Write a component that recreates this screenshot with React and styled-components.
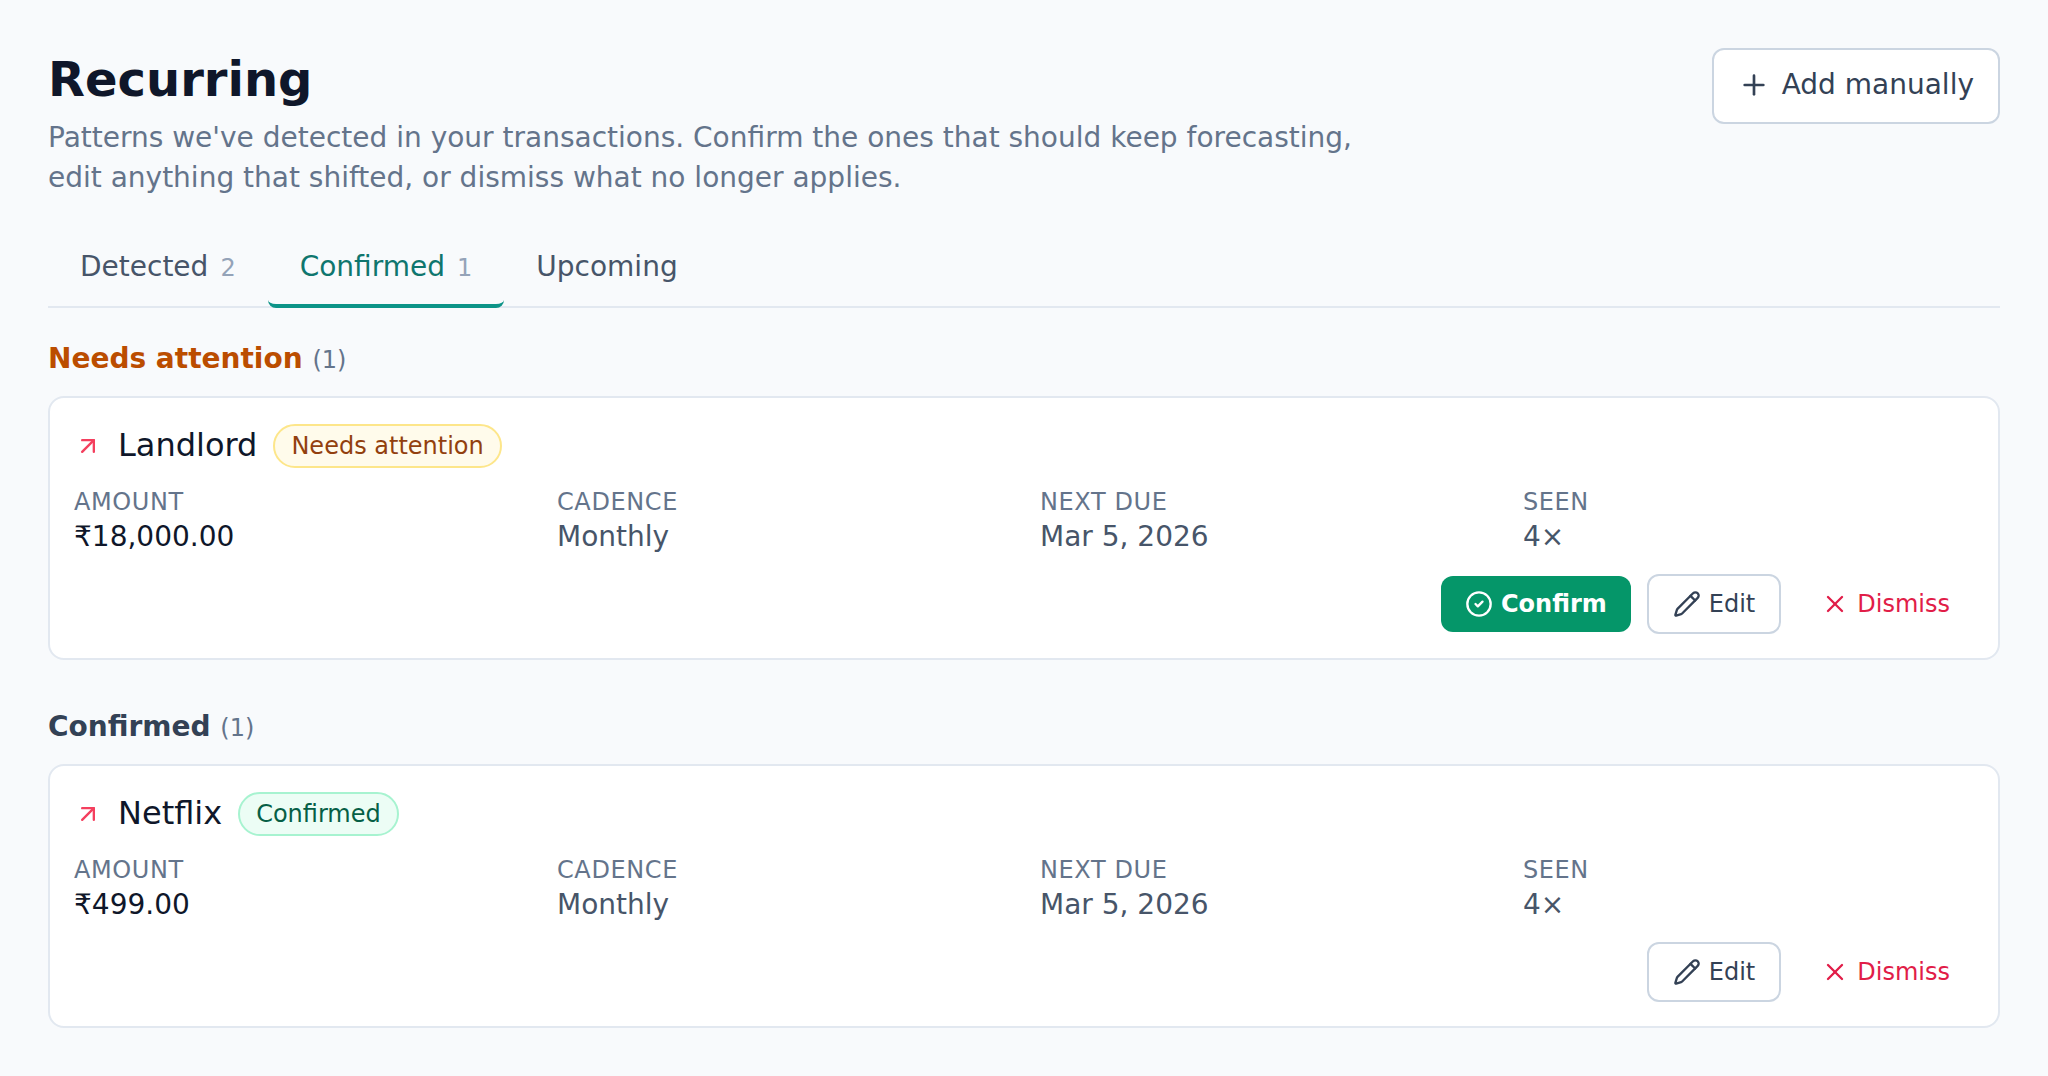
import { useState } from "react";
import styled, { createGlobalStyle, css } from "styled-components";
import { ArrowUpRight, CircleCheck, Pencil, Plus, X } from "lucide-react";

const GlobalStyle = createGlobalStyle`
  *, *::before, *::after {
    box-sizing: border-box;
  }

  body {
    margin: 0;
    background: #f8fafc;
    color: #0f172a;
    font-family: "DejaVu Sans", sans-serif;
    font-size: 28px;
    line-height: 38px;
  }

  h1, h2, h3, p, dl, dd {
    margin: 0;
  }

  button {
    font: inherit;
    cursor: pointer;
  }
`;

const Page = styled.main`
  padding: 48px;
`;

const Header = styled.header`
  display: flex;
  justify-content: space-between;
  align-items: flex-start;
  gap: 32px;
`;

const Title = styled.h1`
  font-size: 48px;
  line-height: 62px;
  font-weight: 700;
`;

const Intro = styled.p`
  max-width: 1344px;
  margin-top: 8px;
  color: #64748b;
  line-height: 40px;
`;

const Button = styled.button`
  display: inline-flex;
  flex-shrink: 0;
  align-items: center;
  gap: 8px;
  padding: 12px 24px;
  border: 0;
  border-radius: 12px;
  background: transparent;
  font-size: 24px;
  line-height: 32px;

  ${(props) =>
    props.$variant === "primary" &&
    css`
      background: #059669;
      color: #fff;
      font-weight: 700;
    `}

  ${(props) =>
    props.$variant === "outline" &&
    css`
      border: 2px solid #cbd5e1;
      background: #fff;
      color: #334155;
    `}

  ${(props) =>
    props.$variant === "danger" &&
    css`
      color: #e11d48;
    `}
`;

const AddButton = styled(Button)`
  gap: 12px;
  padding: 16px 24px 18px;
  font-size: 28px;
  line-height: 38px;
`;

const Tabs = styled.div`
  display: flex;
  margin-top: 34px;
  border-bottom: 2px solid #e2e8f0;
`;

const Tab = styled.button`
  margin-bottom: -2px;
  padding: 16px 32px 18px;
  border: 0;
  border-bottom: 4px solid ${(props) => (props.$active ? "#0d9488" : "transparent")};
  border-radius: 8px;
  background: transparent;
  color: ${(props) => (props.$active ? "#0f766e" : "#475569")};
`;

const TabCount = styled.span`
  margin-left: 12px;
  color: #94a3b8;
  font-size: 24px;
  line-height: 1;
`;

const Section = styled.section`
  margin-top: ${(props) => (props.$first ? "32px" : "48px")};
`;

const SectionTitle = styled.h2`
  margin-bottom: 18px;
  color: ${(props) => (props.$warn ? "#bb4d00" : "#334155")};
  font-size: 28px;
  font-weight: 700;
`;

const SectionCount = styled.span`
  color: #64748b;
  font-size: 24px;
  line-height: 1;
  font-weight: 400;
`;

const Card = styled.article`
  display: flex;
  flex-direction: column;
  gap: 16px;
  padding: 24px;
  border: 2px solid #e2e8f0;
  border-radius: 16px;
  background: #fff;
`;

const CardHead = styled.div`
  display: flex;
  align-items: center;
  gap: 16px;
`;

const CardName = styled.h3`
  padding-bottom: 2px;
  font-size: 32px;
  line-height: 46px;
  font-weight: 400;
`;

const Badge = styled.span`
  padding: 4px 16px;
  border: 2px solid ${(props) => (props.$warn ? "#fde68a" : "#a7f3d0")};
  border-radius: 9999px;
  background: ${(props) => (props.$warn ? "#fffbeb" : "#ecfdf5")};
  color: ${(props) => (props.$warn ? "#92400e" : "#065f46")};
  font-size: 24px;
  line-height: 32px;
`;

const Details = styled.dl`
  display: grid;
  grid-template-columns: repeat(4, minmax(0, 1fr));
  column-gap: 32px;
`;

const Label = styled.dt`
  color: #64748b;
  font-size: 24px;
  line-height: 32px;
  letter-spacing: 0.025em;
  text-transform: uppercase;
`;

const Value = styled.dd`
  padding-bottom: 2px;
  color: ${(props) => (props.$strong ? "#0f172a" : "#475569")};
`;

const Actions = styled.div`
  display: flex;
  justify-content: flex-end;
  align-items: center;
  gap: 16px;
`;

const tabs = [
  { id: "detected", label: "Detected", count: 2 },
  { id: "confirmed", label: "Confirmed", count: 1 },
  { id: "upcoming", label: "Upcoming" },
];

const sections = [
  {
    title: "Needs attention",
    warn: true,
    items: [
      { name: "Landlord", amount: "₹18,000.00", cadence: "Monthly", due: "Mar 5, 2026", seen: 4 },
    ],
  },
  {
    title: "Confirmed",
    warn: false,
    items: [
      { name: "Netflix", amount: "₹499.00", cadence: "Monthly", due: "Mar 5, 2026", seen: 4 },
    ],
  },
];

function RecurringCard({ item, status, warn }) {
  return (
    <Card>
      <CardHead>
        <ArrowUpRight size={28} color="#f43f5e" aria-hidden="true" />
        <CardName>{item.name}</CardName>
        <Badge $warn={warn}>{status}</Badge>
      </CardHead>
      <Details>
        <div>
          <Label>Amount</Label>
          <Value $strong>{item.amount}</Value>
        </div>
        <div>
          <Label>Cadence</Label>
          <Value>{item.cadence}</Value>
        </div>
        <div>
          <Label>Next due</Label>
          <Value>{item.due}</Value>
        </div>
        <div>
          <Label>Seen</Label>
          <Value>{item.seen}×</Value>
        </div>
      </Details>
      <Actions>
        {warn && (
          <Button type="button" $variant="primary">
            <CircleCheck size={28} aria-hidden="true" />
            Confirm
          </Button>
        )}
        <Button type="button" $variant="outline">
          <Pencil size={28} aria-hidden="true" />
          Edit
        </Button>
        <Button type="button" $variant="danger">
          <X size={28} aria-hidden="true" />
          Dismiss
        </Button>
      </Actions>
    </Card>
  );
}

export default function App() {
  const [active, setActive] = useState("confirmed");

  return (
    <>
      <GlobalStyle />
      <Page>
        <Header>
          <div>
            <Title>Recurring</Title>
            <Intro>
              Patterns we've detected in your transactions. Confirm the ones that should keep
              forecasting, edit anything that shifted, or dismiss what no longer applies.
            </Intro>
          </div>
          <AddButton type="button" $variant="outline">
            <Plus size={32} aria-hidden="true" />
            Add manually
          </AddButton>
        </Header>

        <Tabs role="tablist">
          {tabs.map((tab) => (
            <Tab
              key={tab.id}
              type="button"
              role="tab"
              aria-selected={tab.id === active}
              $active={tab.id === active}
              onClick={() => setActive(tab.id)}
            >
              {tab.label}
              {tab.count && <TabCount>{tab.count}</TabCount>}
            </Tab>
          ))}
        </Tabs>

        {sections.map((section, i) => (
          <Section key={section.title} $first={i === 0}>
            <SectionTitle $warn={section.warn}>
              {section.title} <SectionCount>({section.items.length})</SectionCount>
            </SectionTitle>
            {section.items.map((item) => (
              <RecurringCard
                key={item.name}
                item={item}
                status={section.title}
                warn={section.warn}
              />
            ))}
          </Section>
        ))}
      </Page>
    </>
  );
}
